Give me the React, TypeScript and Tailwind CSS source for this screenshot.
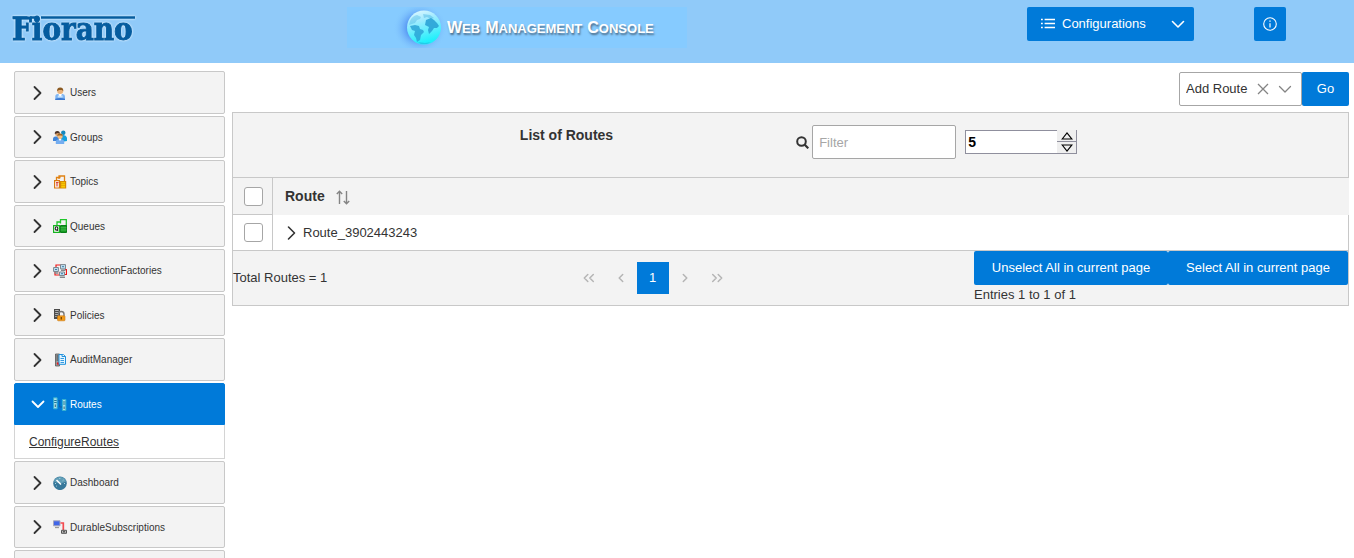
import { useState } from 'react';
import type { ReactNode } from 'react';
import { clsx } from 'clsx';

/* ---------- small icons ---------- */

function Chevron({ open = false, className = 'stroke-[1.8]' }: { open?: boolean; className?: string }) {
    return (
        <svg viewBox="0 0 16 16" className={clsx('w-4 h-4 shrink-0', className)} fill="none" stroke="currentColor" strokeLinecap="round" strokeLinejoin="round">
            <path d={open ? 'M2.500 5.500 8 11l5.500-5.500' : 'M4.500 2 10.500 8 4.500 14'} />
        </svg>
    );
}

function ListIcon() {
    return (
        <svg viewBox="0 0 14 14" className="w-[14px] h-[14px]" fill="none" stroke="currentColor" strokeWidth="1.400">
            <path d="M3.600 2.500H14M3.600 6.500H14M3.600 10.500H14" />
            <path d="M0 2.500h1.800M0 6.500h1.800M0 10.500h1.800" />
        </svg>
    );
}

function InfoIcon() {
    return (
        <svg viewBox="0 0 14 14" className="w-[14px] h-[14px]" fill="none" stroke="currentColor">
            <circle cx="7" cy="7" r="6.300" strokeWidth="1.100" />
            <path d="M7 6.200v4.300" strokeWidth="1.200" />
            <path d="M7 3.400v1.400" strokeWidth="1.300" />
        </svg>
    );
}

function SearchIcon() {
    return (
        <svg viewBox="0 0 13 13" className="w-[13px] h-[13px]" fill="none" stroke="currentColor" strokeWidth="2">
            <circle cx="5.500" cy="5.500" r="4.300" />
            <path d="m8.700 8.700 3.600 3.600" strokeWidth="2.200" />
        </svg>
    );
}

function SortIcon() {
    return (
        <svg viewBox="0 0 14 15" className="mt-0.5 w-[14px] h-[15px]" fill="none" stroke="#848484" strokeWidth="1.400">
            <path d="M3.500 14V1.500M.8 4l2.700-2.800L6.200 4M10.500 1v12.500M7.800 11l2.700 2.800 2.700-2.800" />
        </svg>
    );
}

function Angles({ double = false, right = false }: { double?: boolean; right?: boolean }) {
    return (
        <svg viewBox="0 0 12 10" className={clsx('w-3 h-[10px]', right && 'rotate-180')} fill="none" stroke="currentColor" strokeWidth="1.500" strokeLinecap="round" strokeLinejoin="round">
            <path d={double ? 'M4.800 1.500 1.300 5l3.500 3.500M10.300 1.500 6.800 5l3.500 3.500' : 'M7.700 1.500 4.200 5l3.500 3.500'} />
        </svg>
    );
}

/* ---------- sidebar icons ---------- */

const icons: Record<string, ReactNode> = {
    Users: (
        <>
            <path d="M2.300 14v-3.500Q2.300 8 4.800 8h4.800Q12 8 12 10.500V14Z" fill="#7db4f2" />
            <path d="M2.300 12.800q4.900-1.600 9.700 0V14H2.300Z" fill="#3a78d0" />
            <path d="M4.800 9.500h4.800v2H4.800Z" fill="#c7e2fb" />
            <path d="M5.700 7.500h3V9L7.200 10.500 5.700 9Z" fill="#fff" />
            <circle cx="7.200" cy="5" r="3" fill="#e9b27a" />
            <path d="M4.200 5.300Q3.700 1.500 7.200 1.500t3 3.800L9 4H6Z" fill="#8b5a22" />
        </>
    ),
    Groups: (
        <>
            <circle cx="10.300" cy="2.800" r="2.200" fill="#1387bd" />
            <path d="M8 12V7.500q0-2.500 2.500-2.500T14 7.500V11Z" fill="#139fdc" />
            <circle cx="4.300" cy="3.800" r="2.300" fill="#dca16b" />
            <path d="M1.800 4Q1.500 1 4.300 1t2.500 3L5 3Z" fill="#4d3428" />
            <path d="M0 11V9q0-2.500 2.500-2.500H6V11Z" fill="#3f83d6" />
            <circle cx="7" cy="6.300" r="2.600" fill="#f3bd82" />
            <path d="M4.400 6.600Q4 3.500 7 3.500t2.600 3.100L8.500 5.500h-3Z" fill="#9a6425" />
            <path d="M2.800 14v-1.800Q2.800 9.500 5 9.500h4q2.200 0 2.200 2.700V14Z" fill="#74adf0" />
            <path d="M5.500 9h3L7 11Z" fill="#fff" />
        </>
    ),
    Topics: (
        <>
            <path d="M3.500 5.500v-3h4M6 4V1h5.500v6" fill="none" stroke="#e08214" strokeWidth="1.300" />
            <path d="M1.600 5.600h4.800v7.400H1.600Z" fill="#fff" stroke="#d97812" strokeWidth="1.200" />
            <path d="M3 7.500h2.500M4 7.500v4" stroke="#d9423a" strokeWidth="1.200" />
            <path d="M7.600 6.600h5V13h-5Z" fill="#ffd500" stroke="#d78b00" strokeWidth="1.200" />
            <path d="M7 8.700h6M7 10.700h6" stroke="#d78b00" strokeWidth=".7" />
        </>
    ),
    Queues: (
        <>
            <path d="M4 6V3h4M7.500 4.500v-4h5.800V7" fill="none" stroke="#20c62b" strokeWidth="1.300" />
            <path d="M.6 6.600h5.800v6.800H.6Z" fill="#fff" stroke="#18b322" strokeWidth="1.200" />
            <ellipse cx="3.500" cy="9.500" rx="1.300" ry="1.800" fill="none" stroke="#222" strokeWidth="1.100" />
            <path d="m3.700 10.500 1.500 1.500" stroke="#222" />
            <path d="M7.500 6.500h6v7h-6Z" fill="#159b21" stroke="#087c17" />
            <path d="M7.500 8.800h6M7.500 11h6" stroke="#6ad573" strokeWidth=".6" />
        </>
    ),
    ConnectionFactories: (
        <>
            <path d="M3 4V1h5M12 5.500h1.500v5H11M2 8v3h5M5.500 9h2" fill="none" stroke="#f01818" strokeWidth="1.200" />
            <g fill="#bfe0f2" stroke="#7c8790">
                <path d="M.6 3.500h4.800v4H.6Z" />
                <path d="M7.500.6h5v4.300h-5Z" />
                <path d="M6.500 8h5v3.500h-5Z" />
            </g>
            <path d="M1.500 9h3.500M8 6.300h4.500M6.800 13.300H12" stroke="#84898d" strokeWidth="1.400" />
            <path d="M2 5.500h2M9 2.700h2M8 9.700h2" stroke="#3e7da6" />
        </>
    ),
    Policies: (
        <>
            <path d="M1 1h6v10H1Z" fill="#4b4b4b" />
            <path d="M2.200 2.500h3.500M2.200 4.500h3.500M2.200 6.500h3.500M2.200 8.500h1.500" stroke="#b5b5b5" />
            <path d="M5.500 8V6q0-2.500 2.700-2.500T11 6v2" fill="none" stroke="#777" strokeWidth="1.400" />
            <rect x="4.500" y="7.800" width="7.500" height="5" rx=".8" fill="#f19a19" stroke="#cd7810" strokeWidth=".6" />
            <path d="M8.300 9v2.500" stroke="#764500" strokeWidth="1.300" />
        </>
    ),
    AuditManager: (
        <>
            <path d="M2.500 1h4v12h-4Z" fill="#9b9b9b" stroke="#555" strokeWidth=".8" />
            <path d="M3.500 3h2M3.500 5h2M3.500 7h2" stroke="#444" />
            <circle cx="5" cy="10.500" r="1.200" fill="#f01b1b" />
            <path d="M6 1.500h3v2h3.500v7.800H6Z" fill="#e5f5ff" stroke="#1f91dc" />
            <path d="M9 1.500h1.500l2 2M7.500 5.500h3.500M7.500 7.500h3.500M7.500 9.500h3.500" stroke="#1f91dc" strokeWidth=".9" fill="none" />
        </>
    ),
    Routes: (
        <>
            <path d="M.6.800h3.500v11H.6Z" fill="#a9dfec" stroke="#35b0d0" />
            <path d="M9.400 2.500h3.500v11H9.400Z" fill="#a9dfec" stroke="#35b0d0" />
            <path d="M1.200 3.500h2.500M1.200 5.500h2.500M10 5h2.500M10 7h2.500" stroke="#1e789b" />
            <path d="M2.300 7.500v2.500M11.100 9.500v2.500" stroke="#3d6372" />
            <path d="M5.500 3.500h1.200v6.500H9" fill="none" stroke="#1460a0" />
        </>
    ),
    Dashboard: (
        <>
            <circle cx="7" cy="7.300" r="6.800" fill="#37789b" />
            <path d="M.8 5.500a6.500 6.500 0 0 1 12.400 0Q7 9 .8 5.500Z" fill="#609db6" />
            <path d="m3.500 4 4.500 4.500" stroke="#fff" strokeWidth="1.600" />
            <path d="M2 7.500h1M6.800 2v1M10.500 4l-.8.700M11 7.500h1M3 10.500l.8-.6" stroke="#b9dce8" strokeWidth=".9" />
        </>
    ),
    DurableSubscriptions: (
        <>
            <path d="M.5.800h6.500v5H.5Z" fill="#4166e8" stroke="#a7a7bb" />
            <path d="M2 7.500h4" stroke="#999" strokeWidth="1.300" />
            <path d="M7.500 3h2.800v7" fill="none" stroke="#f34b50" strokeWidth="1.700" />
            <path d="M8.500 10.300h5v3h-5Z" fill="#bbb" stroke="#555" />
            <path d="M10 11.800h2" stroke="#333" />
        </>
    ),
};

const tabs = Object.keys(icons);

/* ---------- header ---------- */

function Logo() {
    return (
        <svg viewBox="0 0 136 40" className="h-10 w-[136px] drop-shadow-[0_0_1px_white]" role="img" aria-label="Fiorano">
            <g fill="#055c9f" stroke="#055c9f">
                <text x="2" y="27" fontFamily="'DejaVu Serif Condensed', 'DejaVu Serif', serif" fontStretch="condensed" fontWeight="700" fontSize="31" strokeWidth=".900">Fiorano</text>
                <path d="M2.500 4.500h15M20 4.500h7.500M31 4.500h94" strokeWidth="2.500" />
            </g>
        </svg>
    );
}

function Globe() {
    return (
        <svg viewBox="0 0 60 41" className="w-[60px] h-[41px]">
            <defs>
                <radialGradient id="glow">
                    <stop offset=".5" stopColor="#5b9cf5" />
                    <stop offset="1" stopColor="#86cbff" stopOpacity="0" />
                </radialGradient>
                <linearGradient id="sea" x1="0" y1="0" x2=".3" y2="1">
                    <stop offset="0" stopColor="#e9fbff" />
                    <stop offset=".35" stopColor="#a5ebff" />
                    <stop offset="1" stopColor="#1ff0fb" />
                </linearGradient>
            </defs>
            <ellipse cx="27" cy="21" rx="27" ry="25" fill="url(#glow)" />
            <circle cx="31" cy="20.500" r="17" fill="url(#sea)" />
            <g fill="#2ba3d6">
                <path d="M17 14q2-5 7-6l4 2-1 2-3 1-2 3-3 1-3 1Z" opacity=".3" />
                <path d="m17 19 5-1 4 1 1 3 3 1 1 2-3 3-1 5-3 2-1-4-2-3 1-4-3-1Z" opacity=".85" />
                <path d="m33 13 5-2 3 2 3 3 2 3-2 2-3 0-2 3-3 3-1-4 1-3-4-2Z" opacity=".9" />
                <path d="m30 7 7 1 4 3-3 1-4-2-3 1Z" opacity=".35" />
                <path d="m25 35 7 1 6-1-4 2h-6Z" opacity=".5" />
            </g>
        </svg>
    );
}

function Banner() {
    return (
        <div className="flex h-[41px] w-[340px] items-center bg-[#86cbff] pl-[46px]">
            <Globe />
            <h1 className="-ml-1.5 flex items-baseline gap-[5px] text-[13px] font-bold text-white uppercase [text-shadow:1px_2px_2px_#4e6f8c]">
                {['Web', 'Management', 'Console'].map(word => (
                    <span key={word} className="inline-block first-letter:text-[16px]">{word}</span>
                ))}
            </h1>
        </div>
    );
}

function Header() {
    return (
        <header className="flex h-[63px] shrink-0 items-start justify-between bg-[#90caf9] pr-[68px] pl-2.5">
            <div className="w-[337px] pt-[13px]">
                <Logo />
            </div>
            <div className="flex-1 pt-[7px]">
                <Banner />
            </div>
            <div className="flex gap-[60px] pt-[7px]">
                <button type="button" className="flex h-[34px] w-[167px] items-center rounded-xs bg-[#007ad9] px-[14px] text-white">
                    <ListIcon />
                    <span className="ml-[7px] flex-1 text-left">Configurations</span>
                    <Chevron open className="-mr-1.5 stroke-[1.6]" />
                </button>
                <button type="button" aria-label="Info" className="flex h-[34px] w-8 items-center justify-center rounded-xs bg-[#007ad9] text-white">
                    <InfoIcon />
                </button>
            </div>
        </header>
    );
}

/* ---------- sidebar ---------- */

function Sidebar() {
    const [active, setActive] = useState('Routes');

    return (
        <nav className="w-[211px] shrink-0">
            <ul className="flex flex-col gap-0.5">
                {tabs.map((name, i) => {
                    const open = name === active;
                    return (
                        <li key={name}>
                            <button
                                type="button"
                                aria-expanded={open}
                                onClick={() => setActive(name)}
                                className={clsx(
                                    'flex w-full items-center border pl-[15px] text-[10px]',
                                    i % 2 ? 'h-[42px]' : 'h-[43px]',
                                    open ? 'rounded-t-xs border-[#007ad9] bg-[#007ad9] text-white' : 'rounded-xs border-[#c8c8c8] bg-[#f3f3f3] text-[#333]',
                                )}
                            >
                                <Chevron open={open} />
                                <svg viewBox="0 0 14 14" className="ml-[7px] mr-[3px] h-[14px] w-[14px]">{icons[name]}</svg>
                                {name}
                            </button>
                            {open && (
                                <div className="flex h-[34px] items-center border border-t-0 border-[#d4d4d4] px-[14px]">
                                    <a href="#configure" className="text-[12px] underline">ConfigureRoutes</a>
                                </div>
                            )}
                        </li>
                    );
                })}
                <li className="h-[43px] rounded-xs border border-[#c8c8c8] bg-[#f3f3f3]" />
            </ul>
        </nav>
    );
}

/* ---------- routes ---------- */

function Check({ label }: { label: string }) {
    return <input type="checkbox" aria-label={label} className="block h-[19px] w-[19px] appearance-none rounded-[3px] border border-[#a6a6a6] bg-white checked:bg-[#007ad9]" />;
}

function ActionBar() {
    return (
        <div className="flex justify-end">
            <div className="relative">
                <select aria-label="Action" className="block h-[34px] w-[123px] appearance-none rounded-xs border border-[#a6a6a6] bg-white pl-1.5">
                    <option>Add Route</option>
                </select>
                <div className="pointer-events-none absolute inset-y-0 right-[9px] flex items-center gap-2 text-[#848484]">
                    <svg viewBox="0 0 12 12" className="h-3 w-3" stroke="currentColor" strokeWidth="1.300">
                        <path d="m1 1 10 10M11 1 1 11" />
                    </svg>
                    <Chevron open className="stroke-[1.3]" />
                </div>
            </div>
            <button type="button" className="h-[34px] w-[47px] rounded-xs bg-[#007ad9] text-white">Go</button>
        </div>
    );
}

function RowsSpinner() {
    const [rows, setRows] = useState(5);
    const step = 'flex flex-1 items-center justify-center border-r border-b border-[#8f8f9d] bg-[#efefef]';

    return (
        <div className="flex h-6 w-28">
            <input
                type="number"
                aria-label="Rows per page"
                value={rows}
                onChange={e => setRows(Number(e.target.value))}
                className="w-[92px] border border-r-0 border-[#8f8f9d] bg-white pl-0.5 text-[14px] font-bold text-black [appearance:textfield] [&::-webkit-inner-spin-button]:appearance-none"
            />
            <div className="flex w-5 flex-col">
                <button type="button" aria-label="More rows" onClick={() => setRows(rows + 1)} className={step}>
                    <svg viewBox="0 0 12 8" className="h-2 w-3" fill="none" stroke="#000" strokeWidth="1.200"><path d="M1.200 7 6 1l4.800 6Z" /></svg>
                </button>
                <button type="button" aria-label="Fewer rows" onClick={() => setRows(Math.max(1, rows - 1))} className={step}>
                    <svg viewBox="0 0 12 8" className="h-2 w-3" fill="none" stroke="#000" strokeWidth="1.200"><path d="M1.200 1 6 7l4.800-6Z" /></svg>
                </button>
            </div>
        </div>
    );
}

function Footer() {
    const pageButton = 'flex h-8 w-8 items-center justify-center text-[#b5b5b5]';

    return (
        <div className="flex items-center justify-between border border-t-0 border-[#c8c8c8] bg-[#f3f3f3]">
            <span className="min-w-[98px]">Total Routes = 1</span>
            <div className="flex">
                <button type="button" aria-label="First page" disabled className={pageButton}><Angles double /></button>
                <button type="button" aria-label="Previous page" disabled className={pageButton}><Angles /></button>
                <button type="button" className="h-8 w-8 bg-[#007ad9] text-white">1</button>
                <button type="button" aria-label="Next page" disabled className={pageButton}><Angles right /></button>
                <button type="button" aria-label="Last page" disabled className={pageButton}><Angles double right /></button>
            </div>
            <div>
                <div className="flex">
                    <button type="button" className="h-[34px] w-[194px] rounded-xs bg-[#007ad9] text-white">Unselect All in current page</button>
                    <button type="button" className="h-[34px] w-[180px] rounded-xs bg-[#007ad9] text-white">Select All in current page</button>
                </div>
                <p className="leading-5">Entries 1 to 1 of 1</p>
            </div>
        </div>
    );
}

function Routes() {
    return (
        <main className="min-w-0 flex-1 pt-px">
            <ActionBar />
            <section className="mt-1.5">
                <div className="flex h-[66px] items-start justify-center gap-[183px] border border-[#c8c8c8] bg-[#f3f3f3] pt-3 pl-4">
                    <h2 className="text-[14px] leading-5 font-bold">List of Routes</h2>
                    <div className="flex items-center">
                        <SearchIcon />
                        <input type="text" aria-label="Filter" placeholder="Filter" className="mr-[9px] ml-[3px] h-[34px] w-36 rounded-xs border border-[#a6a6a6] bg-white px-1.5 placeholder:text-[#a6a6a6]" />
                        <RowsSpinner />
                    </div>
                </div>
                <table className="w-full border-separate border-spacing-0">
                    <thead>
                        <tr className="h-[37px] bg-[#f3f3f3]">
                            <th className="w-[41px] border-x border-b border-[#c8c8c8] pl-[11px]"><Check label="Select all" /></th>
                            <th className="pl-3 text-left text-[14px] font-bold">
                                <button type="button" className="flex items-center gap-[11px]">Route <SortIcon /></button>
                            </th>
                        </tr>
                    </thead>
                    <tbody>
                        <tr className="h-9">
                            <td className="border-x border-b border-[#c8c8c8] pl-[11px]"><Check label="Select Route_3902443243" /></td>
                            <td className="border-r border-b border-[#c8c8c8] pl-[11px]">
                                <div className="flex items-center gap-[3px]">
                                    <button type="button" aria-label="Expand"><Chevron className="stroke-[1.6]" /></button>
                                    Route_3902443243
                                </div>
                            </td>
                        </tr>
                    </tbody>
                </table>
                <Footer />
            </section>
        </main>
    );
}

export default function App() {
    return (
        <div className="flex h-screen flex-col overflow-hidden bg-white font-['Liberation_Sans',Arial,sans-serif] text-[13px] text-[#333]">
            <Header />
            <div className="flex gap-[7px] pt-2 pr-[5px] pl-[14px]">
                <Sidebar />
                <Routes />
            </div>
        </div>
    );
}
